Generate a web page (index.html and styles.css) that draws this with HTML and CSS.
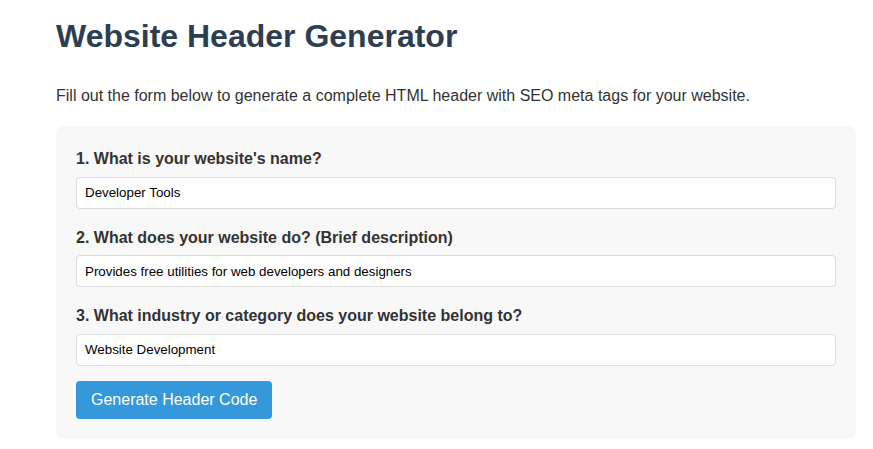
FILE: index.html
```html
<!DOCTYPE html>
<html lang="en">
<head>
<meta charset="utf-8">
<title>Website Header Generator</title>
<link rel="stylesheet" href="styles.css">
</head>
<body>
<div class="page">
  <h1 class="title">Website Header Generator</h1>
  <p class="intro">Fill out the form below to generate a complete HTML header with SEO meta tags for your website.</p>
  <form class="card">
    <div class="group">
      <label class="label" for="name">1. What is your website's name?</label>
      <input class="field" id="name" type="text" value="Developer Tools">
    </div>
    <div class="group">
      <label class="label" for="desc">2. What does your website do? (Brief description)</label>
      <input class="field" id="desc" type="text" value="Provides free utilities for web developers and designers">
    </div>
    <div class="group last">
      <label class="label" for="cat">3. What industry or category does your website belong to?</label>
      <input class="field" id="cat" type="text" value="Website Development">
    </div>
    <button class="btn" type="button">Generate Header Code</button>
  </form>
</div>
</body>
</html>
```

FILE: styles.css
```css
html, body {
  margin: 0;
  padding: 0;
  background: #ffffff;
}
body {
  font-family: "Liberation Sans", Arial, sans-serif;
  color: #333333;
  line-height: 1.6;
}
.page {
  width: 800px;
  margin-left: 56px;
  padding-top: 17px;
}
.title {
  margin: 0 0 28px;
  font-size: 32px;
  line-height: 1.2;
  font-weight: bold;
  color: #2c3e50;
}
.intro {
  margin: 0 0 17px;
  font-size: 16px;
}
.card {
  background: #f8f8f8;
  border-radius: 8px;
  padding: 20px;
}
.group {
  margin-bottom: 16px;
}
.group.last {
  margin-bottom: 15px;
}
.label {
  display: block;
  font-weight: bold;
  font-size: 16px;
  margin-bottom: 5px;
}
.field {
  display: block;
  box-sizing: border-box;
  width: 100%;
  height: 32px;
  padding: 8px;
  border: 1px solid #dddddd;
  border-radius: 4px;
  background: #ffffff;
  font-family: "Liberation Sans", Arial, sans-serif;
  font-size: 13.33px;
  color: #000000;
}
.btn {
  display: block;
  background: #3498db;
  color: #ffffff;
  border: none;
  border-radius: 4px;
  padding: 10px 15px;
  font-family: "Liberation Sans", Arial, sans-serif;
  font-size: 16px;
  line-height: normal;
  cursor: pointer;
}
```
